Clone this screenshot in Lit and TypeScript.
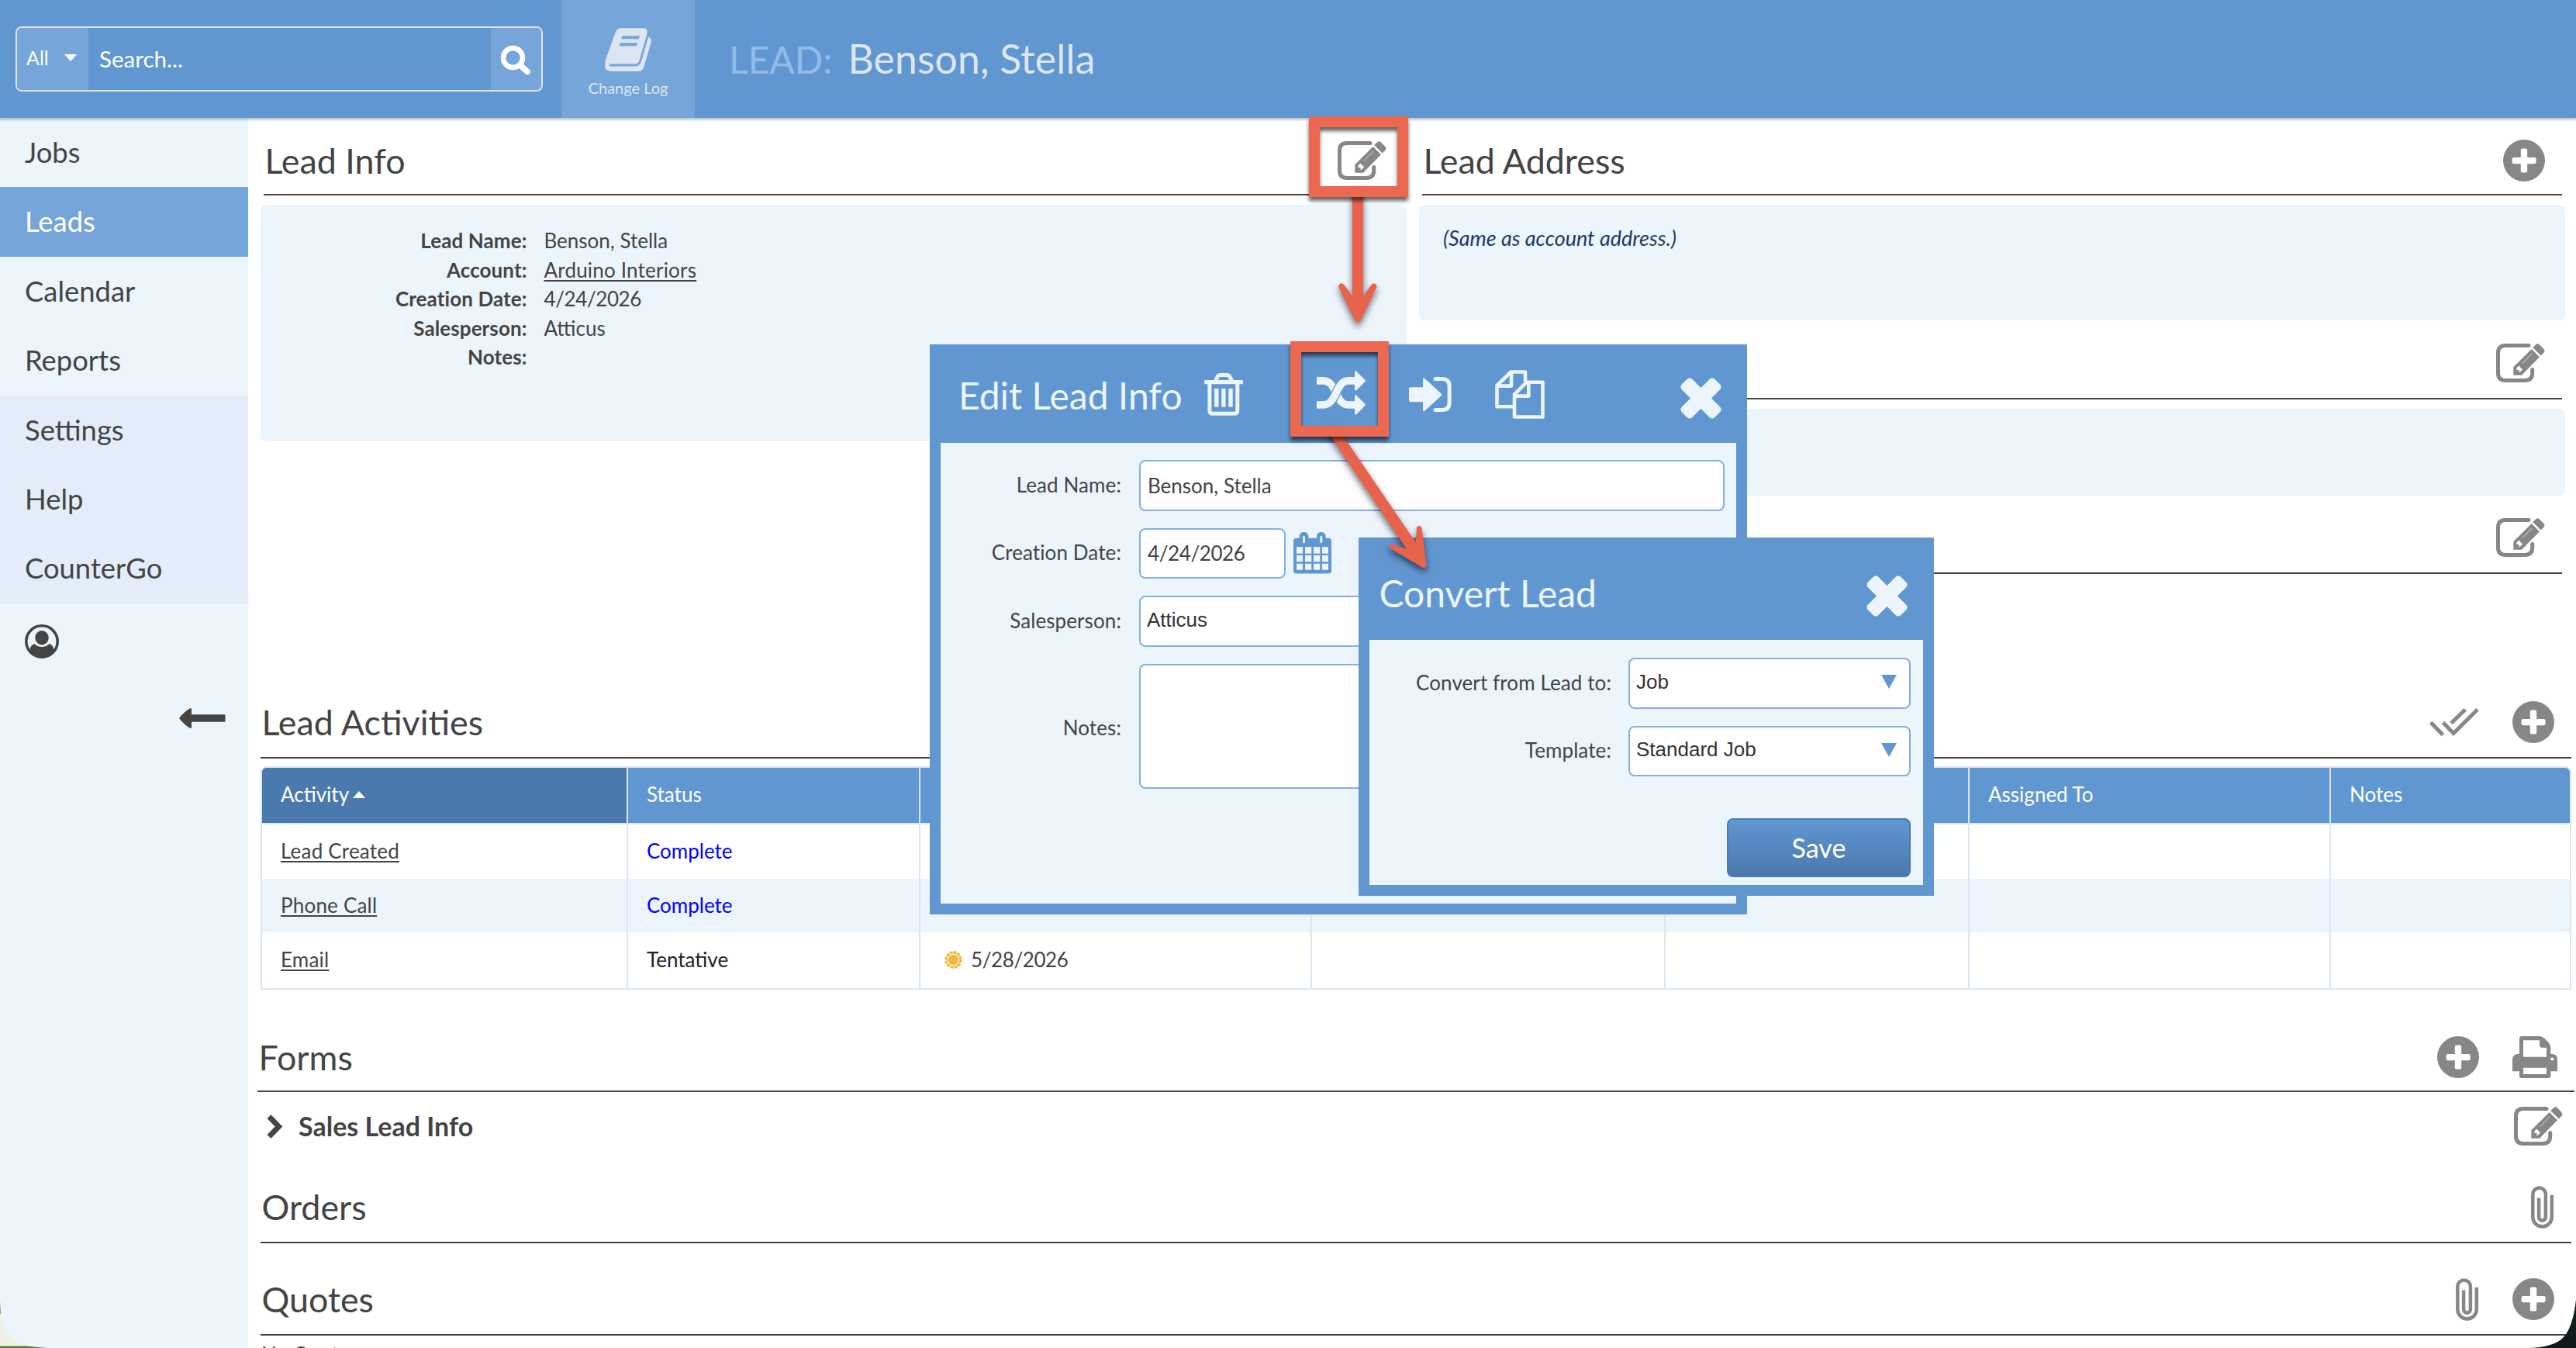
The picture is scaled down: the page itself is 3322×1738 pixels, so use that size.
import { LitElement, css, html, svg } from 'lit';
import { customElement, property } from 'lit/decorators.js';
import { classMap } from 'lit/directives/class-map.js';

const icons: Record<string, { w: number; h: number; body: unknown }> = {
  book: {
    w: 60,
    h: 56,
    body: svg`
      <path fill="currentColor" d="M20 .3H50q6 .5 4.4 6.5L54 10.5q6 1.500 6 6.500L50.500 50q-2 6-7.500 6H9Q0 56 0 48L1 41 14 5Q16 .3 20 .3z"/>
      <path fill="none" stroke="#76a5da" stroke-width="2.800" d="M55.500 9 45.800 42.500q-1.600 5.500-7 5.500H6"/>
      <path fill="#76a5da" d="M22.500 10.300H45l-1.200 4H21.300zM19.700 19.300H42.200l-1.200 4H18.500z"/>`,
  },
  search: {
    w: 40,
    h: 38,
    body: svg`<circle cx="16.500" cy="15.500" r="12.500" fill="none" stroke="currentColor" stroke-width="6.500"/>
      <path stroke="currentColor" stroke-width="7.500" stroke-linecap="round" d="m26 25 9 8.500"/>`,
  },
  user: {
    w: 44,
    h: 44,
    body: svg`<circle cx="22" cy="22" r="20.200" fill="none" stroke="currentColor" stroke-width="3.600"/>
      <ellipse cx="22" cy="17.300" rx="8.700" ry="9.200" fill="currentColor"/>
      <path fill="currentColor" d="M6.500 33q.5-6 6-8 3.500 4 9.500 4t9.500-4q5.500 2 6 8-6 9.500-15.500 9.500T6.500 33z"/>`,
  },
  back: {
    w: 60,
    h: 26,
    body: svg`<path fill="currentColor" d="M0 13Q7 4 14.500 0q1.500 0 1.500 1.500V8.300H58.500q1 0 1 1v7.400q0 1-1 1H16v6.800q0 1.500-1.500 1.500Q7 22 0 13z"/>`,
  },
  edit: {
    w: 63,
    h: 50,
    body: svg`<path fill="none" stroke="currentColor" stroke-width="5" stroke-linecap="round" d="M42 2.500H12Q2.500 2.500 2.500 12V38q0 9.500 9.500 9.500H37q9.700 0 9.700-9.500V33.500"/>
      <path fill="currentColor" d="M22.300 30.300 45.700 7 56 17.300 33 40.700H22.300zM47.200 5.100l4-3.800q2.500-2 4.800.2l5.200 5.200q2.300 2.600.3 5l-3.800 3.900z"/>
      <path stroke="#d8d8d8" d="M33.700 25.700 46 13"/>
      <path fill="#fff" d="m29.200 28.600 4.900 4.800-3.300 3.300h-1.300v-2.600h-3v-2.700z"/>`,
  },
  plus: {
    w: 54,
    h: 54,
    body: svg`<circle cx="27" cy="27" r="27" fill="currentColor"/>
      <rect x="22.800" y="11.600" width="8.400" height="31" rx="2.200" fill="#fff"/>
      <rect x="11.600" y="22.900" width="31" height="8.400" rx="2.200" fill="#fff"/>`,
  },
  checks: {
    w: 64,
    h: 37,
    body: svg`<path fill="none" stroke="currentColor" stroke-width="5" d="m1.800 18.500 15.500 16M17.500 18.500l13.500 14L62 1.800M28 19.500 46.200 1.800"/>`,
  },
  print: {
    w: 58,
    h: 54,
    body: svg`<path fill="currentColor" fill-rule="evenodd" d="M9 22.700V3q0-3 3-3H36.500L41 2.500 47 8.500 49.300 14v8.700Q58 22.700 58 30V45.300H49.300V51q0 3-3 3H12q-3 0-3-3V45.300H0V30q0-7.300 9-7.300zM14 5.200V26.700H44V14.700H38q-3 0-3-3V5.200zM14 40.800V49H44V40.800z"/>
      <circle cx="51.200" cy="29.400" r="2" fill="#fff"/>`,
  },
  clip: {
    w: 30,
    h: 55,
    body: svg`<path fill="none" stroke="currentColor" stroke-width="4.500" d="M26.800 11.800V40.200a12.250 12.250 0 0 1-24.500 0V10.700a8.300 8.300 0 0 1 16.600 0V40.300a4.400 4.400 0 0 1-8.800 0V15.400"/>`,
  },
  chevron: {
    w: 21,
    h: 31,
    body: svg`<path fill="none" stroke="currentColor" stroke-width="7" d="M3 2.600 15.500 15.500 3 28.400"/>`,
  },
  trash: {
    w: 50,
    h: 55,
    body: svg`<path fill="none" stroke="currentColor" stroke-width="5" d="M14.500 10l2.700-5.300q1-2.200 3.500-2.200h8.600q2.500 0 3.500 2.200L35.500 10M6.900 12V48.500q0 3.800 3.800 3.800H39q3.800 0 3.800-3.800V12"/>
      <rect y="9" width="50" height="5.300" rx="1.500" fill="currentColor"/>
      <path stroke="currentColor" stroke-width="5.400" d="M15.800 20V43.700M24.900 20V43.700M34 20V43.700"/>`,
  },
  shuffle: {
    w: 63,
    h: 57,
    body: svg`<path fill="none" stroke="currentColor" stroke-width="9.600" d="M0 12.900H8c9.500 0 12.500 7 17 15.800S32 44 41.500 44H50"/>
      <path fill="none" stroke="#6197d1" stroke-width="12" d="M5 44H8c9.500 0 12.500-7 17-15.500S32 12.900 41.500 12.900"/>
      <path fill="none" stroke="currentColor" stroke-width="9.600" d="M0 44H8c9.500 0 12.500-7 17-15.500S32 12.900 41.500 12.900H50"/>
      <path fill="currentColor" d="M49 1q1-1.500 2.500 0L62.500 12q1 1 0 2L51.500 25q-1.500 1-2.500-.5zM49 32q1-1.500 2.500 0L62.500 43q1 1 0 2L51.500 56q-1.500 1-2.500-.5z"/>`,
  },
  signin: {
    w: 55,
    h: 45,
    body: svg`<path fill="currentColor" d="M2 13.300H18V3q0-3 2.500-1L41.500 21.500q1.500 1.500 0 3L20.500 43.500q-2.500 2-2.500-1V32.300H2q-2 0-2-2v-15q0-2 2-2z"/>
      <path fill="none" stroke="currentColor" stroke-width="5" stroke-linecap="round" d="M34 2.600H42.500q9.600 0 9.600 9.600V33q0 9.600-9.600 9.600H34"/>`,
  },
  copy: {
    w: 64,
    h: 63,
    body: svg`<path fill="none" stroke="currentColor" stroke-width="4.600" stroke-linejoin="round" d="M24 47.300H2.500V20L20.500 2.500H39V15M21 3V20.600H3M25 31.500 40.500 15.800H61.500V60.500H25zM43.300 16V33.600H26"/>`,
  },
  close: {
    w: 53,
    h: 53,
    body: svg`<g fill="currentColor" transform="rotate(45 26.500 26.500)"><rect x="-3.500" y="17" width="60" height="19" rx="4.500"/><rect x="17" y="-3.500" width="19" height="60" rx="4.500"/></g>`,
  },
  calendar: {
    w: 49,
    h: 54,
    body: svg`<path fill="currentColor" d="M4 7.700H7.700V5a5.800 5 0 0 1 11.600 0V7.700H30V5a5.800 5 0 0 1 11.600 0V7.700H45q4 0 4 4V49.500q0 4-4 4H4q-4 0-4-4V11.700q0-4 4-4z"/>
      <path fill="#ecf4fc" d="M12 6q1.500-2.500 3 0v7q-1.500 2.500-3 0zM34.300 6q1.500-2.500 3 0v7q-1.500 2.500-3 0zM4 19.300h8v8.400H4zM15 19.300h8.300v8.400H15zM26 19.300h8.300v8.400H26zM37 19.300h8v8.400H37zM4 29.900h8v8.400H4zM15 29.900h8.300v8.400H15zM26 29.900h8.300v8.400H26zM37 29.900h8v8.400H37zM4 40.700h8v8H4zM15 40.700h8.300v8H15zM26 40.700h8.300v8H26zM37 40.700h8v8H37z"/>`,
  },
  sun: {
    w: 23,
    h: 23,
    body: svg`<circle cx="11.500" cy="11.500" r="9.700" fill="none" stroke="currentColor" stroke-width="3.400" stroke-dasharray="3.600 1.480"/>
      <circle cx="11.500" cy="11.500" r="8.600" fill="none" stroke="currentColor" stroke-width="1.400"/>
      <circle cx="11.500" cy="11.500" r="6.800" fill="currentColor"/>`,
  },
};

@customElement('ui-icon')
export class UiIcon extends LitElement {
  @property() name = '';

  static styles = css`
    :host {
      display: block;
      flex: none;
    }
    svg {
      display: block;
      overflow: visible;
    }
  `;

  render() {
    const i = icons[this.name];
    return html`<svg width=${i.w} height=${i.h} viewBox="0 0 ${i.w} ${i.h}">${i.body}</svg>`;
  }
}

@customElement('section-head')
export class SectionHead extends LitElement {
  @property() heading = '';
  @property({ type: Array }) actions: string[] = [];

  static styles = css`
    :host {
      display: flex;
      align-items: center;
      justify-content: space-between;
      box-sizing: border-box;
      height: 92px;
      border-bottom: 2px solid #444;
      padding: 0 22px 0 1.500px;
    }
    .heading {
      font-size: 44.800px;
      white-space: nowrap;
    }
    .actions {
      display: flex;
      align-items: center;
      gap: 43.500px;
      color: #878787;
    }
  `;

  render() {
    return html`
      <div class="heading">${this.heading}</div>
      <div class="actions">${this.actions.map((a) => html`<ui-icon name=${a}></ui-icon>`)}</div>
    `;
  }
}

@customElement('app-root')
export class AppRoot extends LitElement {
  nav = [
    { label: 'Jobs' },
    { label: 'Leads', active: true },
    { label: 'Calendar' },
    { label: 'Reports' },
    { label: 'Settings', tinted: true },
    { label: 'Help', tinted: true },
    { label: 'CounterGo', tinted: true },
  ];

  info = [
    ['Lead Name:', 'Benson, Stella'],
    ['Account:', 'Arduino Interiors', 'link'],
    ['Creation Date:', '4/24/2026', 'digits'],
    ['Salesperson:', 'Atticus'],
    ['Notes:', ''],
  ];

  columns = ['Activity', 'Status', '', '', '', 'Assigned To', 'Notes'];

  activities = [
    { name: 'Lead Created', status: 'Complete', date: '' },
    { name: 'Phone Call', status: 'Complete', date: '' },
    { name: 'Email', status: 'Tentative', date: '5/28/2026' },
  ];

  renderHeader() {
    return html`
      <header class="header">
        <div class="search">
          <div class="scope">All<span class="caret"></span></div>
          <div class="query">Search...</div>
          <div class="go"><ui-icon name="search"></ui-icon></div>
        </div>
        <div class="log"><ui-icon name="book"></ui-icon><span>Change Log</span></div>
        <div class="crumb"><span class="kind">LEAD:</span><span class="who">Benson, Stella</span></div>
      </header>
    `;
  }

  renderNav() {
    return html`
      <nav class="nav">
        ${this.nav.map(
          (n) => html`<div class=${classMap({ item: true, active: !!n.active, tinted: !!n.tinted })}>${n.label}</div>`
        )}
        <ui-icon class="user" name="user"></ui-icon>
        <ui-icon class="back" name="back"></ui-icon>
      </nav>
    `;
  }

  renderTop() {
    return html`
      <div class="top">
        <div>
          <section-head class="first" heading="Lead Info" .actions=${['edit']}></section-head>
          <div class="panel info">
            ${this.info.map(([k, v, cls]) => html`<b>${k}</b><span class=${cls ?? ''}>${v}</span>`)}
          </div>
        </div>
        <div>
          <section-head class="first plain" heading="Lead Address" .actions=${['plus']}></section-head>
          <div class="panel address">(Same as account address.)</div>
          <section-head class="second" .actions=${['edit']}></section-head>
          <div class="panel contact"></div>
          <section-head class="third" .actions=${['edit']}></section-head>
        </div>
      </div>
    `;
  }

  renderTable() {
    return html`
      <div class="table">
        <div class="row head">
          ${this.columns.map(
            (c, i) => html`<div class=${classMap({ cell: true, sorted: i === 0 })}>${c}${i === 0 ? html`<span class="asc"></span>` : ''}</div>`
          )}
        </div>
        ${this.activities.map(
          (a) => html`
            <div class="row">
              <div class="cell"><span class="link">${a.name}</span></div>
              <div class="cell ${a.status.toLowerCase()}">${a.status}</div>
              <div class="cell due digits">${a.date ? html`<ui-icon name="sun"></ui-icon>${a.date}` : ''}</div>
              <div class="cell"></div>
              <div class="cell"></div>
              <div class="cell"></div>
              <div class="cell"></div>
            </div>
          `
        )}
      </div>
    `;
  }

  renderEdit() {
    return html`
      <div class="modal edit">
        <div class="bar">
          <div class="title">Edit Lead Info</div>
          <ui-icon name="trash"></ui-icon>
          <ui-icon class="shuffle" name="shuffle"></ui-icon>
          <ui-icon class="tool" name="signin"></ui-icon>
          <ui-icon class="tool" name="copy"></ui-icon>
          <ui-icon class="close" name="close"></ui-icon>
        </div>
        <div class="body">
          <div class="line"><label>Lead Name:</label><div class="field">Benson, Stella</div></div>
          <div class="line">
            <label>Creation Date:</label>
            <div class="field date digits">4/24/2026</div>
            <ui-icon class="cal" name="calendar"></ui-icon>
          </div>
          <div class="line"><label>Salesperson:</label><div class="field select">Atticus</div></div>
          <div class="line notes"><label>Notes:</label><div class="field area"></div></div>
        </div>
      </div>
    `;
  }

  renderConvert() {
    return html`
      <div class="modal convert">
        <div class="bar">
          <div class="title">Convert Lead</div>
          <ui-icon class="close" name="close"></ui-icon>
        </div>
        <div class="body">
          <div class="line"><label>Convert from Lead to:</label><div class="field select">Job<span class="drop"></span></div></div>
          <div class="line"><label>Template:</label><div class="field select">Standard Job<span class="drop"></span></div></div>
          <div class="save">Save</div>
        </div>
      </div>
    `;
  }

  // red call-outs over the page: two arrows, then the frames on top of their tails
  renderMarks() {
    return html`
      <svg class="arrows" width="3322" height="1738" viewBox="0 0 3322 1738">
        <path d="M1744 240V382L1734 368Q1729 362 1726 369.500L1747.500 413Q1751 419 1754.500 413L1775.500 369.500Q1773 362 1768 368L1758 382V240z"/>
        <path d="M1708 550 1814 708.300 1798 701.800Q1789 700 1792 706.500L1834 731.500Q1840 733 1839.500 727L1833.500 681Q1830 674.500 1826.800 681L1825.700 699.300 1724 550z"/>
      </svg>
      <div class="frame one"></div>
      <div class="frame two"></div>
    `;
  }

  render() {
    return html`
      ${this.renderHeader()}
      <div class="page">
        ${this.renderNav()}
        <main class="main">
          ${this.renderTop()}
          <section-head class="acts" heading="Lead Activities" .actions=${['checks', 'plus']}></section-head>
          ${this.renderTable()}
          <section-head class="forms" heading="Forms" .actions=${['plus', 'print']}></section-head>
          <div class="form-row">
            <ui-icon name="chevron"></ui-icon>
            <b>Sales Lead Info</b>
            <ui-icon class="grey" name="edit"></ui-icon>
          </div>
          <section-head class="orders" heading="Orders" .actions=${['clip']}></section-head>
          <section-head class="quotes" heading="Quotes" .actions=${['clip', 'plus']}></section-head>
          <div class="none">No Quotes</div>
        </main>
      </div>
      ${this.renderEdit()} ${this.renderConvert()} ${this.renderMarks()}
      <svg class="corner left" width="70" height="60" viewBox="0 0 70 60">
        <path fill="#eef0e6" d="M0 0Q1 30 12 44T44 58.500L60 60H0z"/>
        <path fill="#8b8a88" d="M0 0 1 16H0z"/>
        <path fill="#5f7a2b" d="M0 57.500H34L60 60H0z"/>
      </svg>
      <svg class="corner right" width="62" height="62" viewBox="0 0 62 62">
        <path fill="#10191b" d="M62 0V62H0Q34 61 46 48T62 0z"/>
      </svg>
    `;
  }

  static styles = css`
    :host {
      display: flex;
      flex-direction: column;
      position: relative;
      width: 3322px;
      height: 1738px;
      overflow: hidden;
      background: #fff;
      color: #444;
      font: 26px Lato, sans-serif;
    }

    .header {
      display: flex;
      align-items: center;
      flex: none;
      height: 152px;
      background: #6197d1;
      color: #dce6f1;
      position: relative;
      z-index: 1;
      box-shadow: 0 3px 2px rgba(70, 90, 110, 0.3);
    }
    .search {
      display: flex;
      box-sizing: border-box;
      width: 680px;
      height: 84px;
      margin: 0 24px 0 20px;
      border: 2px solid #dce6f1;
      border-radius: 8px;
      overflow: hidden;
      color: #fff;
    }
    .scope {
      display: flex;
      align-items: center;
      justify-content: space-between;
      box-sizing: border-box;
      width: 92px;
      padding: 0 15px 4px 12px;
      background: #76a5da;
      font-size: 25px;
    }
    .caret {
      border: 8px solid transparent;
      border-top: 9px solid #fff;
      border-bottom: 0;
    }
    .query {
      flex: 1;
      padding-left: 14px;
      font-size: 29.600px;
      line-height: 80px;
    }
    .go {
      width: 65px;
      box-sizing: border-box;
      padding: 23px 0 0 12px;
      background: #76a5da;
    }
    .log {
      display: flex;
      flex-direction: column;
      align-items: center;
      gap: 9px;
      width: 172px;
      height: 116px;
      padding-top: 36px;
      background: #76a5da;
      font-size: 20px;
    }
    .crumb {
      display: flex;
      align-items: baseline;
      gap: 20px;
      margin-left: 44px;
      line-height: 152px;
    }
    .kind {
      font-size: 48px;
      color: #92bce8;
    }
    .who {
      font-size: 52px;
    }

    .page {
      display: flex;
      flex: 1;
      min-height: 0;
    }
    .nav {
      display: flex;
      flex-direction: column;
      width: 320px;
      background: #ecf4fc;
      font-size: 36.400px;
    }
    .item {
      height: 89.400px;
      line-height: 89.400px;
      padding-left: 32px;
    }
    .active {
      background: #76a5da;
      color: #fff;
    }
    .tinted {
      background: #e3edf9;
    }
    .user {
      margin: 27px 0 0 32px;
    }
    .back {
      margin: 64px 29px 0 auto;
    }

    .main {
      flex: 1;
      min-width: 0;
    }
    .top {
      display: grid;
      grid-template-columns: 1478px 1478px;
      gap: 16px;
      height: 734px;
      padding-left: 16px;
    }
    .first {
      height: 100px;
      padding-top: 11px;
      margin: 0 4px 12px;
    }
    .second {
      margin: 10px 4px 12px;
    }
    .third {
      margin: 9px 4px 0;
    }
    .panel {
      box-sizing: border-box;
      background: #ecf4fc;
      border-radius: 8px;
    }
    .info {
      display: grid;
      grid-template-columns: 343.500px 1fr;
      column-gap: 22px;
      height: 305px;
      padding-top: 28px;
      line-height: 37.600px;
      align-content: start;
    }
    .info b {
      text-align: right;
      letter-spacing: 0.100px;
    }
    .address {
      height: 149px;
      padding: 27px 31px;
      line-height: 32px;
      font-size: 27px;
      font-style: italic;
      color: #1f3a66;
    }
    .contact {
      height: 112px;
    }
    .link {
      letter-spacing: 0.200px;
      text-decoration: underline;
      text-decoration-thickness: 2px;
      text-underline-offset: 3px;
    }
    .digits {
      letter-spacing: -0.400px;
    }

    .acts {
      margin: 0 6px 0 16px;
    }
    .table {
      margin: 10px 6px 0 16px;
      border: 2px solid #dae6f3;
      border-radius: 8px 8px 0 0;
      overflow: hidden;
    }
    .row {
      display: grid;
      grid-template-columns: 472px 377px 505px 456px 392px 466px 1fr;
      height: 69px;
    }
    .row:nth-child(2) {
      height: 70px;
    }
    .row:nth-child(3) {
      background: #ecf4fc;
    }
    .row:nth-child(4) {
      height: 72px;
    }
    .row.head {
      height: 71px;
      border-bottom: 2px solid #dae6f3;
      background: #6197d1;
      color: #fff;
    }
    .cell {
      display: flex;
      align-items: center;
      padding: 0 0 2px 24px;
      border-right: 2px solid #dae6f3;
    }
    .head .cell {
      padding-bottom: 3px;
    }
    .cell:last-child {
      border-right: 0;
    }
    .sorted {
      background: #4a79ae;
    }
    .asc {
      margin-left: 5px;
      border: 8px solid transparent;
      border-top: 0;
      border-bottom: 9px solid #fff;
    }
    .complete {
      color: #00f;
    }
    .tentative {
      color: #222;
    }
    .due {
      gap: 11px;
      padding-left: 31px;
    }
    .due ui-icon {
      color: #eeb843;
    }

    .forms {
      margin: 38px 2px 0 12px;
      height: 94px;
      padding-top: 5px;
    }
    .form-row {
      display: flex;
      align-items: center;
      height: 88px;
      padding: 0 17px 0 24px;
      font-size: 34px;
    }
    .form-row b {
      flex: 1;
      margin: 0 0 2px 20px;
    }
    .grey {
      color: #878787;
    }
    .orders {
      margin: 15px 6px 0 16px;
    }
    .quotes {
      margin: 27px 6px 0 16px;
    }
    .none {
      padding: 8px 0 0 17px;
      line-height: 32px;
    }

    .modal {
      position: absolute;
      display: flex;
      flex-direction: column;
      box-sizing: border-box;
      padding: 0 14px 14px;
      background: #6197d1;
    }
    .edit {
      left: 1199px;
      top: 444px;
      width: 1054px;
      height: 735px;
    }
    .convert {
      left: 1752px;
      top: 693px;
      width: 742px;
      height: 462px;
    }
    .bar {
      display: flex;
      align-items: center;
      box-sizing: border-box;
      height: 127px;
      padding: 2px 19px 0 23px;
      color: #ecf4fc;
    }
    .convert .bar {
      height: 132px;
      padding: 10px 20px 0 12.500px;
    }
    .title {
      width: 317px;
      font-size: 48px;
      white-space: nowrap;
    }
    .edit .title {
      padding-top: 1px;
    }
    .shuffle {
      margin: 0 56px 4px 95px;
    }
    .tool {
      margin-right: 56px;
    }
    .close {
      margin: 10px 0 0 auto;
    }
    .convert .close {
      margin-top: 8px;
    }
    .body {
      display: flex;
      flex-direction: column;
      gap: 22px;
      flex: 1;
      padding: 22px 15px 0 0;
      background: #ecf4fc;
    }
    .convert .body {
      padding: 23px 16px 0 0;
    }
    .line {
      display: flex;
      align-items: center;
    }
    label {
      width: 233px;
      margin: 0 23px 2px 0;
      text-align: right;
      letter-spacing: 0.100px;
    }
    .notes label {
      margin: 4px 23px 0 0;
    }
    .convert label {
      width: 312px;
      margin-right: 22px;
    }
    .field {
      display: flex;
      align-items: center;
      justify-content: space-between;
      flex: 1;
      box-sizing: border-box;
      height: 65.500px;
      padding: 0 16px 0 9px;
      border: 2px solid #84b0e2;
      border-radius: 8px;
      background: #fff;
    }
    .date {
      flex: none;
      width: 189px;
    }
    .cal {
      margin-left: 10px;
      color: #6197d1;
    }
    .select {
      padding: 0 16px 3px 8px;
      font-family: 'Liberation Sans', sans-serif;
      color: #333;
    }
    .area {
      height: 161px;
    }
    .drop {
      border: 10px solid transparent;
      border-top: 18px solid #6197d1;
      border-bottom: 0;
    }
    .save {
      box-sizing: border-box;
      width: 237px;
      height: 76px;
      margin: 32px 0 0 auto;
      border: 2px solid #4a7ab0;
      border-radius: 8px;
      background: linear-gradient(#6197d3, #4a78ac);
      color: #fff;
      font-size: 34px;
      line-height: 71px;
      text-align: center;
    }

    .arrows {
      position: absolute;
      left: 0;
      top: 0;
      z-index: 2;
      fill: #e9624c;
      filter: drop-shadow(0 5px 4px rgba(0, 0, 0, 0.55));
    }
    .frame {
      position: absolute;
      z-index: 3;
      box-sizing: border-box;
      border: 14px solid #ec6850;
      box-shadow: 0 5px 5px rgba(0, 0, 0, 0.6), inset 0 5px 5px rgba(0, 0, 0, 0.6);
    }
    .one {
      left: 1688px;
      top: 150px;
      width: 128px;
      height: 104px;
    }
    .two {
      left: 1664px;
      top: 440px;
      width: 127px;
      height: 123px;
    }
    .corner {
      position: absolute;
      bottom: 0;
    }
    .left {
      left: 0;
    }
    .right {
      right: 0;
    }
  `;
}
